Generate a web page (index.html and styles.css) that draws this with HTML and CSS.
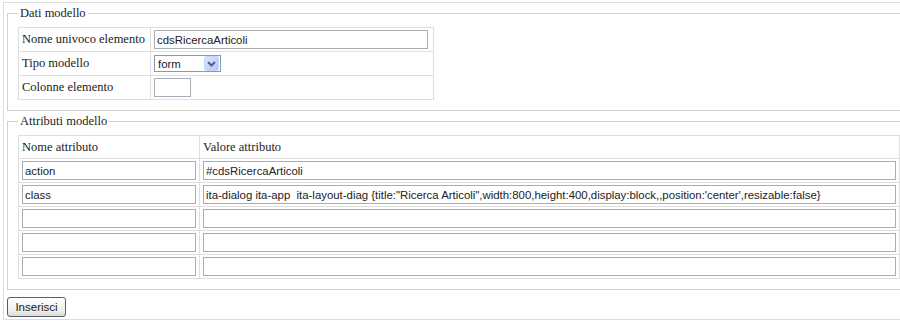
FILE: index.html
```html
<!DOCTYPE html>
<html lang="it">
<head>
    <meta charset="UTF-8">
    <title>Modello</title>
    <link rel="stylesheet" href="styles.css">
</head>
<body>
    <div class="page">
        <fieldset class="group">
            <legend>Dati modello</legend>
            <table class="grid grid-model">
                <tr>
                    <td class="label">Nome univoco elemento</td>
                    <td class="value"><input class="field field-name" type="text" value="cdsRicercaArticoli"></td>
                </tr>
                <tr>
                    <td class="label">Tipo modello</td>
                    <td class="value">
                        <div class="select">
                            <span class="select-value">form</span>
                            <span class="select-btn">
                                <svg width="15" height="15" viewBox="0 0 15 15">
                                    <defs>
                                        <linearGradient id="btnGrad" x1="0" y1="0" x2="1" y2="1">
                                            <stop offset="0" stop-color="#dce7fd"/>
                                            <stop offset="1" stop-color="#b3c7f4"/>
                                        </linearGradient>
                                    </defs>
                                    <rect x="0.5" y="0.5" width="14" height="14" rx="2" fill="url(#btnGrad)" stroke="#c3d3f9"/>
                                    <path d="M4 6 L7.5 9.5 L11 6" fill="none" stroke="#4d6185" stroke-width="2"/>
                                </svg>
                            </span>
                        </div>
                    </td>
                </tr>
                <tr>
                    <td class="label">Colonne elemento</td>
                    <td class="value"><input class="field field-cols" type="text"></td>
                </tr>
            </table>
        </fieldset>

        <fieldset class="group group-attrs">
            <legend>Attributi modello</legend>
            <table class="grid grid-attrs">
                <tr>
                    <th class="col-name">Nome attributo</th>
                    <th>Valore attributo</th>
                </tr>
                <tr>
                    <td><input class="field" type="text" value="action"></td>
                    <td><input class="field" type="text" value="#cdsRicercaArticoli"></td>
                </tr>
                <tr>
                    <td><input class="field" type="text" value="class"></td>
                    <td><input class="field" type="text" value="ita-dialog ita-app  ita-layout-diag {title:&quot;Ricerca Articoli&quot;,width:800,height:400,display:block,,position:'center',resizable:false}"></td>
                </tr>
                <tr>
                    <td><input class="field" type="text"></td>
                    <td><input class="field" type="text"></td>
                </tr>
                <tr>
                    <td><input class="field" type="text"></td>
                    <td><input class="field" type="text"></td>
                </tr>
                <tr>
                    <td><input class="field" type="text"></td>
                    <td><input class="field" type="text"></td>
                </tr>
            </table>
        </fieldset>

        <button class="btn" type="button">Inserisci</button>
    </div>
</body>
</html>
```

FILE: styles.css
```css
body {
    margin: 2px 0 0 3px;
    background: #ffffff;
    font-family: "Liberation Serif", "Times New Roman", serif;
    font-size: 12.5px;
    color: #222222;
    overflow: hidden;
}
.page {
    width: 911px;
    box-sizing: border-box;
    border: 1px solid #dddddd;
    padding: 3px 3px 2px 3px;
}
.group {
    margin: 0;
    border: 1px solid #d3d3c9;
    padding: 6px 9px 10px 10px;
    min-width: 0;
}
.group-attrs {
    margin-top: 3px;
    padding-bottom: 10px;
}
legend {
    padding: 0 2px;
    line-height: 15px;
    font-size: 12.5px;
}
.grid {
    border-collapse: collapse;
}
.grid td, .grid th {
    border: 1px solid #dedede;
    padding: 2px 3px;
    text-align: left;
    font-weight: normal;
    vertical-align: middle;
    white-space: nowrap;
}
.grid-model .label {
    width: 125px;
}
.grid-model .value {
    width: 275px;
    padding-right: 4px;
}
.grid-attrs {
    width: 882px;
}
.grid-attrs th {
    height: 18px;
}
.grid-attrs .col-name {
    width: 174px;
}
.field {
    display: block;
    box-sizing: border-box;
    width: 100%;
    height: 19px;
    margin: 0;
    padding: 0 2px;
    border: 1px solid #a9aeb3;
    font-family: "Liberation Sans", Arial, sans-serif;
    font-size: 11.4px;
    color: #222222;
    background: #ffffff;
}
.field-name {
    width: 274px;
}
.field-cols {
    width: 37px;
}
.select {
    display: flex;
    align-items: center;
    justify-content: space-between;
    box-sizing: border-box;
    width: 67px;
    height: 17px;
    margin: 1px 0;
    padding: 0 1px 0 3px;
    border: 1px solid #7f9db9;
    font-family: "Liberation Sans", Arial, sans-serif;
    font-size: 11.4px;
}
.select-btn {
    display: flex;
}
.btn {
    display: block;
    width: 59px;
    height: 20px;
    margin-top: 7px;
    padding: 0;
    border: 1px solid #4f5f74;
    border-radius: 3px;
    background: linear-gradient(#ffffff, #f0efe9 70%, #dcdad0);
    font-family: "Liberation Sans", Tahoma, sans-serif;
    font-size: 11.5px;
    color: #1a1a1a;
}
```
